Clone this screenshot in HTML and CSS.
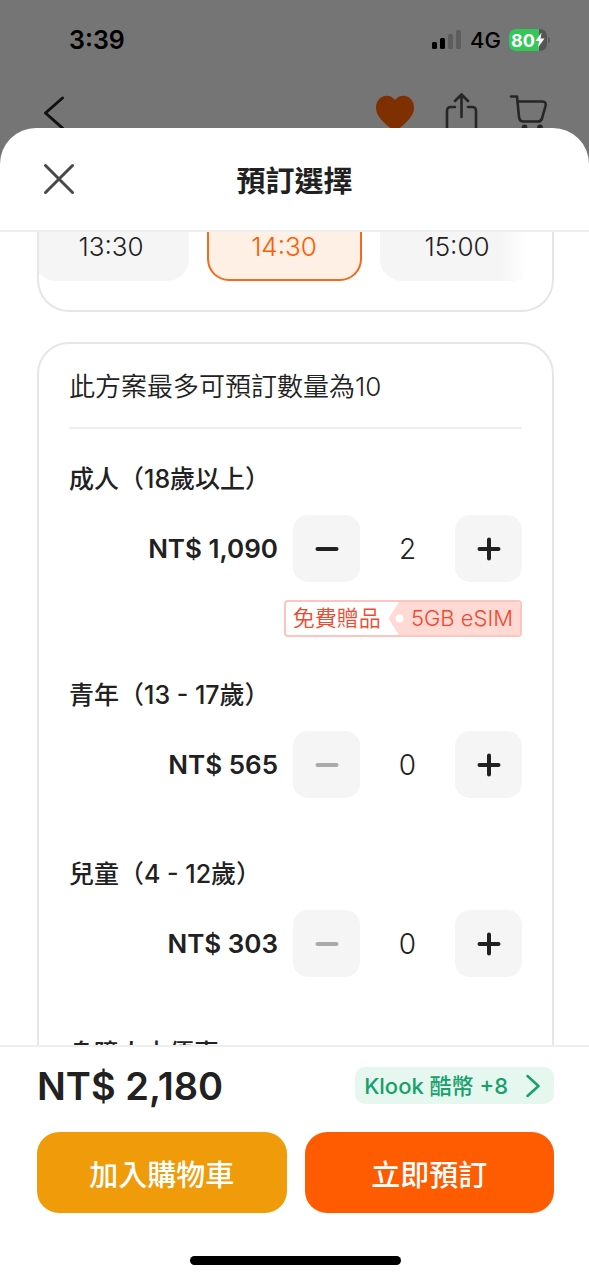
FILE: index.html
```
<!DOCTYPE html>
<html lang="zh-Hant">
<head>
<meta charset="utf-8">
<meta name="viewport" content="width=device-width, initial-scale=1">
<title>預訂選擇</title>
<link rel="stylesheet" href="styles.css">
</head>
<body>
<div class="screen">
  <div class="backdrop">
    <div class="status">
      <span class="status-time">3:39</span>
      <div class="status-right">
        <svg class="signal" viewBox="0 0 30 20" aria-hidden="true">
          <rect x="0" y="12" width="5" height="7" rx="1.5" fill="#000"/>
          <rect x="8" y="8" width="5" height="11" rx="1.5" fill="#000"/>
          <rect x="16" y="4" width="5" height="15" rx="1.5" fill="#5d5d5d"/>
          <rect x="24" y="0" width="5" height="19" rx="1.5" fill="#5d5d5d"/>
        </svg>
        <span class="network">4G</span>
        <span class="battery">
          <span class="battery-text">80</span>
          <svg class="bolt" viewBox="0 0 10 16" aria-hidden="true"><path d="M6.5 0.5 0.5 9H4.2L3 15.5 9.5 6.5H5.6Z" fill="#fff"/></svg>
        </span>
      </div>
    </div>
    <div class="nav">
      <button class="icon-button" aria-label="返回">
        <svg viewBox="0 0 40 40" class="nav-icon"><path d="M25.500 5 8.500 20 25.500 35" fill="none" stroke="#111" stroke-width="3" stroke-linecap="round" stroke-linejoin="round"/></svg>
      </button>
      <div class="nav-actions">
        <button class="icon-button" aria-label="收藏">
          <svg viewBox="0 0 40 40" class="nav-icon"><path d="M20 7C16 2 11 2.500 8 3.500 3 5.500 1 10 1 15c0 8 8 15 15 20.500q4 3 8 0C31 30 39 23 39 15c0-5-2-9.500-7-11.500C29 2.500 24 2 20 7Z" fill="#7f3000"/></svg>
        </button>
        <button class="icon-button" aria-label="分享">
          <svg viewBox="0 0 40 40" class="nav-icon" fill="none" stroke="#262626" stroke-width="2.600" stroke-linecap="round" stroke-linejoin="round"><path d="M13 14H9q-4 0-4 4v18q0 3 3 3h23q3 0 3-3V18q0-4-4-4h-4M19.500 24V2M13 8l6.500-6.500L26 8"/></svg>
        </button>
        <button class="icon-button" aria-label="購物車">
          <svg viewBox="0 0 40 40" class="nav-icon" fill="none" stroke="#262626" stroke-width="2.600" stroke-linecap="round" stroke-linejoin="round"><path d="M2 3.500H8L10 24q.6 4.500 4.500 4.500H29q3 0 4-3L36.500 13q1-4.500-3-4.500H9"/><circle cx="15.500" cy="34.500" r="1.600" fill="#262626"/><circle cx="31" cy="34.500" r="1.600" fill="#262626"/></svg>
        </button>
      </div>
    </div>
  </div>

  <section class="sheet" role="dialog" aria-labelledby="sheet-title">
    <header class="sheet-header">
      <button class="icon-button" aria-label="關閉">
        <svg viewBox="0 0 32 32" class="close-icon"><path d="M2.500 2.500 29.500 29.500M29.500 2.500 2.500 29.500" fill="none" stroke="#484848" stroke-width="3" stroke-linecap="round"/></svg>
      </button>
      <h1 class="sheet-title" id="sheet-title">預訂選擇</h1>
    </header>

    <main class="content">
      <div class="card card-times">
        <div class="times">
          <button class="time">13:30</button>
          <button class="time time-selected" aria-pressed="true">14:30</button>
          <button class="time">15:00</button>
        </div>
      </div>

      <div class="card card-tickets">
        <p class="limit">此方案最多可預訂數量為10</p>

        <div class="ticket">
          <h2 class="ticket-name">成人（18歲以上）</h2>
          <div class="ticket-row">
            <span class="ticket-price">NT$ 1,090</span>
            <button class="step" aria-label="減少成人"><svg class="step-icon" viewBox="0 0 24 24"><path d="M2.500 12h19"/></svg></button>
            <output class="count">2</output>
            <button class="step" aria-label="增加成人"><svg class="step-icon" viewBox="0 0 24 24"><path d="M2.500 12h19M12 2.500v19"/></svg></button>
          </div>
          <div class="gift">
            <span class="gift-label">免費贈品</span>
            <svg class="gift-notch" viewBox="0 0 18 33" aria-hidden="true"><path d="M18 0H10L1 14q-1.500 2.500 0 5L10 33h8Z" fill="#ffd9d4"/><circle cx="10.500" cy="16.500" r="4" fill="#fff"/></svg>
            <span class="gift-value">5GB eSIM</span>
          </div>
        </div>

        <div class="ticket">
          <h2 class="ticket-name">青年（13 - 17歲）</h2>
          <div class="ticket-row">
            <span class="ticket-price">NT$ 565</span>
            <button class="step" aria-label="減少青年" disabled><svg class="step-icon" viewBox="0 0 24 24"><path d="M2.500 12h19"/></svg></button>
            <output class="count">0</output>
            <button class="step" aria-label="增加青年"><svg class="step-icon" viewBox="0 0 24 24"><path d="M2.500 12h19M12 2.500v19"/></svg></button>
          </div>
        </div>

        <div class="ticket">
          <h2 class="ticket-name">兒童（4 - 12歲）</h2>
          <div class="ticket-row">
            <span class="ticket-price">NT$ 303</span>
            <button class="step" aria-label="減少兒童" disabled><svg class="step-icon" viewBox="0 0 24 24"><path d="M2.500 12h19"/></svg></button>
            <output class="count">0</output>
            <button class="step" aria-label="增加兒童"><svg class="step-icon" viewBox="0 0 24 24"><path d="M2.500 12h19M12 2.500v19"/></svg></button>
          </div>
        </div>

        <div class="ticket">
          <h2 class="ticket-name">身障人士優惠</h2>
        </div>
      </div>
    </main>

    <footer class="footer">
      <div class="summary">
        <span class="total">NT$ 2,180</span>
        <a class="coins" href="#">Klook 酷幣 +8
          <svg class="coins-arrow" viewBox="0 0 14 24" aria-hidden="true"><path d="M1.500 2 12.500 12 1.500 22" fill="none" stroke="#16a06a" stroke-width="2.500" stroke-linecap="round" stroke-linejoin="round"/></svg>
        </a>
      </div>
      <div class="actions">
        <button class="action action-cart">加入購物車</button>
        <button class="action action-book">立即預訂</button>
      </div>
      <div class="home-bar"></div>
    </footer>
  </section>
</div>
</body>
</html>
```
FILE: styles.css
```
* {
  box-sizing: border-box;
}

body {
  margin: 0;
  background: #757575;
  color: #212121;
  font-family: Inter, "Noto Sans CJK TC", sans-serif;
}

button {
  border: 0;
  padding: 0;
  background: none;
  color: inherit;
  font: inherit;
}

.screen {
  display: flex;
  flex-direction: column;
  height: 100vh;
}

/* Dimmed page behind the sheet */
.backdrop {
  flex: none;
}

.status {
  display: flex;
  align-items: center;
  justify-content: space-between;
  height: 80px;
  padding: 0 42px 0 69px;
  color: #000;
}

.status-time {
  font-size: 25px;
  font-weight: 600;
}

.status-right {
  display: flex;
  align-items: center;
  gap: 8px;
}

.signal {
  width: 30px;
  height: 20px;
}

.network {
  font-size: 22px;
  font-weight: 500;
}

.battery {
  position: relative;
  display: flex;
  align-items: center;
  justify-content: center;
  width: 38px;
  height: 22px;
  border-radius: 7px;
  background: linear-gradient(to right, #34c759 80%, #555 80%);
  color: #fff;
}

.battery::after {
  content: "";
  position: absolute;
  right: -3px;
  top: 8px;
  width: 2px;
  height: 6px;
  border-radius: 0 2px 2px 0;
  background: #5d5d5d;
}

.battery-text {
  font-size: 18px;
  font-weight: 700;
}

.bolt {
  width: 10px;
  height: 16px;
}

.nav {
  display: flex;
  justify-content: space-between;
  height: 48px;
  padding: 13px 40px 0 37px;
  overflow: hidden;
}

.nav-actions {
  display: flex;
  gap: 27px;
}

.icon-button {
  display: flex;
}

.nav-icon {
  width: 40px;
  height: 40px;
}

/* Sheet */
.sheet {
  flex: 1;
  display: flex;
  flex-direction: column;
  min-height: 0;
  border-radius: 36px 36px 0 0;
  background: #fff;
}

.sheet-header {
  display: grid;
  grid-template-columns: 32px 1fr 32px;
  align-items: center;
  flex: none;
  height: 104px;
  padding: 0 43px;
  border-bottom: 2px solid #eee;
}

.close-icon {
  width: 32px;
  height: 32px;
}

.sheet-title {
  margin: 0;
  font-size: 29px;
  font-weight: 700;
  text-align: center;
}

.content {
  flex: 1;
  display: flex;
  flex-direction: column;
  gap: 30px;
  min-height: 0;
  padding: 0 35px 0 37px;
  overflow: hidden;
}

.card {
  flex: none;
  border: 2px solid #e6e6e6;
  border-radius: 32px;
}

.card-times {
  padding-bottom: 29px;
  border-top: 0;
  border-radius: 0 0 32px 32px;
}

.times {
  position: relative;
  display: flex;
  justify-content: center;
  gap: 18px;
  margin-right: 23px;
  overflow: hidden;
}

.times::after {
  content: "";
  position: absolute;
  inset: 0 0 0 auto;
  width: 28px;
  background: linear-gradient(to right, transparent, #fff 90%);
}

.time {
  flex: none;
  width: 155px;
  height: 49px;
  padding-bottom: 20px;
  border-radius: 0 0 22px 22px;
  background: #f5f5f5;
  font-size: 26px;
  font-weight: 350;
  line-height: 28px;
}

.time-selected {
  padding-bottom: 18px;
  border: 2px solid #f26a1b;
  border-top: 0;
  background: #fff0e5;
  color: #ff5b00;
}

.card-tickets {
  padding: 0 30px;
}

.limit {
  margin: 0 0 32px;
  padding: 25px 0 22px;
  border-bottom: 2px solid #eee;
  font-size: 26px;
  font-weight: 350;
  line-height: 36px;
}

.ticket {
  display: flex;
  flex-direction: column;
  gap: 18px;
  padding-bottom: 58px;
}

.ticket:has(.gift) {
  padding-bottom: 40px;
}

.ticket-name {
  margin: 0;
  font-size: 25px;
  font-weight: 500;
  line-height: 36px;
}

.ticket-row {
  display: flex;
  align-items: center;
  justify-content: flex-end;
}

.ticket-price {
  margin-right: 15px;
  font-size: 26px;
  font-weight: 600;
}

.step {
  display: flex;
  align-items: center;
  justify-content: center;
  width: 67px;
  height: 67px;
  border-radius: 15px;
  background: #f5f5f5;
  color: #212121;
}

.step:disabled {
  color: #aaa;
}

.step-icon {
  width: 24px;
  height: 24px;
  fill: none;
  stroke: currentColor;
  stroke-width: 4;
  stroke-linecap: round;
}

.count {
  width: 95px;
  font-size: 28px;
  font-weight: 350;
  text-align: center;
}

.gift {
  display: flex;
  align-self: flex-end;
  height: 37px;
  border: 2px solid #fcc5bf;
  border-radius: 4px;
  overflow: hidden;
  color: #f0492f;
  font-size: 22px;
  font-weight: 350;
  line-height: 33px;
}

.gift-label {
  padding: 0 8px 0 7px;
}

.gift-notch {
  width: 18px;
  height: 33px;
}

.gift-value {
  padding: 0 7px 0 4px;
  background: #ffd9d4;
}

/* Footer */
.footer {
  flex: none;
  display: flex;
  flex-direction: column;
  padding: 20px 35px 15px 37px;
  border-top: 2px solid #eee;
}

.summary {
  display: flex;
  align-items: center;
  justify-content: space-between;
  height: 37px;
  margin-bottom: 28px;
}

.total {
  font-size: 38px;
  font-weight: 600;
}

.coins {
  display: flex;
  align-items: center;
  gap: 18px;
  height: 37px;
  padding: 0 14px 0 9px;
  border-radius: 10px;
  background: #e6f7f0;
  color: #16a06a;
  font-size: 22px;
  font-weight: 500;
  line-height: 32px;
  text-decoration: none;
}

.coins-arrow {
  width: 14px;
  height: 24px;
}

.actions {
  display: grid;
  grid-template-columns: 1fr 1fr;
  gap: 18px;
  margin-bottom: 43px;
}

.action {
  height: 81px;
  border-radius: 22px;
  color: #fff;
  font-size: 29px;
  font-weight: 500;
}

.action-cart {
  background: #f09b0a;
}

.action-book {
  background: #ff5b00;
}

.home-bar {
  align-self: center;
  width: 211px;
  height: 9px;
  border-radius: 5px;
  background: #000;
}
```
